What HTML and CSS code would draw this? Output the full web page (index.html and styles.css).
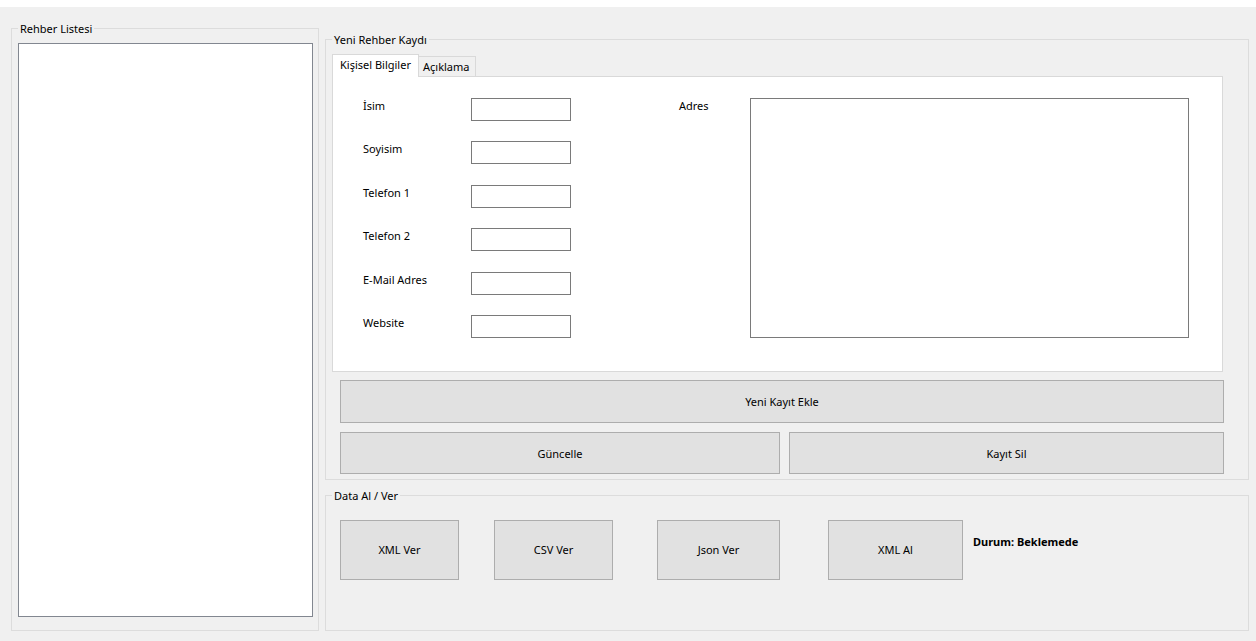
FILE: index.html
```html
<!DOCTYPE html>
<html lang="tr">
<head>
<meta charset="utf-8">
<title>Rehber</title>
<link rel="stylesheet" href="styles.css">
</head>
<body>
<div class="titlestrip"></div>
<div class="app">
  <fieldset class="group group-list">
    <legend>Rehber Listesi</legend>
    <div class="listbox"></div>
  </fieldset>
  <div class="right">
    <fieldset class="group group-entry">
      <legend>Yeni Rehber Kaydı</legend>
      <div class="tabs">
        <div class="tab-strip">
          <div class="tab tab-active">Kişisel Bilgiler</div>
          <div class="tab tab-inactive">Açıklama</div>
        </div>
        <div class="tab-page">
          <div class="fields">
            <div class="field"><label class="lbl">İsim</label><input class="textbox" type="text"></div>
            <div class="field"><label class="lbl">Soyisim</label><input class="textbox" type="text"></div>
            <div class="field"><label class="lbl">Telefon 1</label><input class="textbox" type="text"></div>
            <div class="field"><label class="lbl">Telefon 2</label><input class="textbox" type="text"></div>
            <div class="field"><label class="lbl">E-Mail Adres</label><input class="textbox" type="text"></div>
            <div class="field"><label class="lbl">Website</label><input class="textbox" type="text"></div>
          </div>
          <div class="address">
            <label class="lbl lbl-address">Adres</label>
            <textarea class="textarea"></textarea>
          </div>
        </div>
      </div>
      <button class="btn btn-add" type="button">Yeni Kayıt Ekle</button>
      <div class="btn-row">
        <button class="btn btn-update" type="button">Güncelle</button>
        <button class="btn btn-delete" type="button">Kayıt Sil</button>
      </div>
    </fieldset>
    <fieldset class="group group-data">
      <legend>Data Al / Ver</legend>
      <button class="btn btn-data btn-xml-out" type="button">XML Ver</button>
      <button class="btn btn-data btn-csv-out" type="button">CSV Ver</button>
      <button class="btn btn-data btn-json-out" type="button">Json Ver</button>
      <button class="btn btn-data btn-xml-in" type="button">XML Al</button>
      <span class="status">Durum: Beklemede</span>
    </fieldset>
  </div>
</div>
</body>
</html>
```

FILE: styles.css
```css
* { box-sizing: border-box; }
html, body { margin: 0; height: 100%; }
body {
  background: #f0f0f0;
  font-family: "Noto Sans", "Open Sans", sans-serif;
  font-size: 11px;
  color: #000;
  overflow: hidden;
}
.titlestrip { height: 7px; background: #fff; }
.app {
  display: flex;
  height: 634px;
  padding: 13px 7px 10px 11px;
}
.group {
  margin: 0;
  border: 1px solid #dcdcdc;
  min-width: 0;
}
.group > legend {
  padding: 0 2px;
  line-height: 17px;
  height: 17px;
}
.group-list {
  width: 308px;
  flex: none;
  padding: 6px 5px 13px 6px;
  display: flex;
  flex-direction: column;
}
.listbox {
  flex: 1;
  background: #fff;
  border: 1px solid #828790;
}
.right {
  flex: 1;
  min-width: 0;
  margin: 11px 0 0 6px;
  display: flex;
  flex-direction: column;
  gap: 7px;
}
.group-entry { padding: 6px 6px 5px 6px; }
.tabs { width: 891px; }
.tab-strip {
  display: flex;
  align-items: flex-end;
  height: 22px;
}
.tab {
  border: 1px solid #d9d9d9;
  border-bottom: none;
  white-space: nowrap;
}
.tab-active {
  position: relative;
  z-index: 1;
  width: 87px;
  height: 23px;
  margin-bottom: -1px;
  padding: 1px 0 0 7px;
  line-height: 17px;
  background: #fff;
}
.tab-inactive {
  width: 57px;
  height: 20px;
  border-left: none;
  padding: 1px 0 0 4px;
  line-height: 17px;
  background: #f0f0f0;
}
.tab-page {
  height: 296px;
  border: 1px solid #d9d9d9;
  background: #fff;
  display: flex;
  align-items: flex-start;
  padding: 21px 0 0 30px;
}
.fields {
  display: flex;
  flex-direction: column;
  gap: 20.4px;
}
.field {
  display: flex;
  align-items: flex-start;
  height: 23px;
}
.lbl {
  width: 108px;
  line-height: 16px;
}
.textbox {
  width: 100px;
  height: 23px;
  margin: 0;
  padding: 0 2px;
  border: 1px solid #7a7a7a;
  background: #fff;
  font: inherit;
  outline: none;
}
.address {
  display: flex;
  align-items: flex-start;
  margin-left: 108px;
}
.lbl-address { width: 71px; }
.textarea {
  width: 439px;
  height: 240px;
  margin: 0;
  padding: 2px;
  border: 1px solid #7a7a7a;
  background: #fff;
  font: inherit;
  resize: none;
  outline: none;
}
.btn {
  margin: 0;
  padding: 0;
  font: inherit;
  color: #000;
  background: #e1e1e1;
  border: 1px solid #adadad;
  border-radius: 0;
}
.btn-add {
  display: block;
  width: 884px;
  height: 43px;
  margin: 8px 0 0 8px;
}
.btn-row {
  display: flex;
  gap: 9px;
  margin: 9px 0 0 8px;
}
.btn-update { width: 440px; height: 42px; }
.btn-delete { width: 435px; height: 42px; }
.group-data {
  flex: 1;
  display: flex;
  align-items: flex-start;
  padding: 16px 6px 0 6px;
}
.btn-data { height: 60px; flex: none; padding-bottom: 2px; }
.btn-xml-out { width: 119px; margin-left: 8px; }
.btn-csv-out { width: 119px; margin-left: 35px; }
.btn-json-out { width: 123px; margin-left: 44px; }
.btn-xml-in { width: 135px; margin-left: 48px; }
.status {
  margin: 14px 0 0 10px;
  font-weight: bold;
  line-height: 16px;
  white-space: nowrap;
}
```
